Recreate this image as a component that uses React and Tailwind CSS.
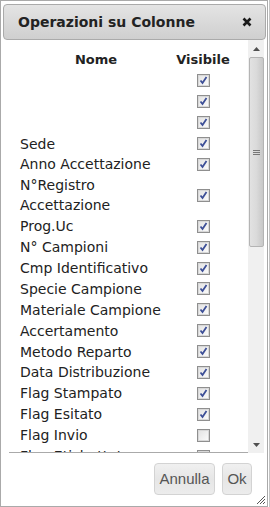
import React from "react";

const rows = [
  { t: "", c: true },
  { t: "", c: true },
  { t: "", c: true },
  { t: "Sede", c: true },
  { t: "Anno Accettazione", c: true },
  { t: ["N°Registro", "Accettazione"], c: true },
  { t: "Prog.Uc", c: true },
  { t: "N° Campioni", c: true },
  { t: "Cmp Identificativo", c: true },
  { t: "Specie Campione", c: true },
  { t: "Materiale Campione", c: true },
  { t: "Accertamento", c: true },
  { t: "Metodo Reparto", c: true },
  { t: "Data Distribuzione", c: true },
  { t: "Flag Stampato", c: true },
  { t: "Flag Esitato", c: true },
  { t: "Flag Invio", c: false },
  { t: "Flag Etichettato", c: false },
];

function Check({ checked }) {
  return (
    <span className="flex w-[13px] h-[13px] border border-[#8f8f8f] bg-gradient-to-br from-[#dcdcdc] to-[#fbfbfb] items-center justify-center">
      <span className="flex w-[11px] h-[11px] border border-[#d8d8d8] bg-gradient-to-br from-[#e4e4e4] to-[#fafafa] items-center justify-center">
        {checked && (
          <svg width="9" height="9" viewBox="0 0 9 9">
            <path d="M1.5 4.5 L3.5 7 L7.5 1" fill="none" stroke="#3d4f97" strokeWidth="1.8" />
          </svg>
        )}
      </span>
    </span>
  );
}

export default function App() {
  return (
    <div className="w-[270px] h-[507px] flex bg-white overflow-hidden" style={{ fontFamily: "'DejaVu Sans', Verdana, sans-serif" }}>
      <div className="w-[268px] h-[507px] border border-[#aaaaaa] flex flex-col relative bg-white">
        {/* title bar */}
        <div className="mt-[3px] ml-[2px] mr-[1px] h-[36px] border border-[#aaaaaa] rounded-[4px] bg-gradient-to-b from-[#e4e4e4] to-[#cfcfcf] flex items-center justify-between pl-[14px] pr-[13px]">
          <span className="text-[14px] font-bold text-[#222222] leading-none">Operazioni su Colonne</span>
          <svg width="10" height="10" viewBox="0 0 10 10">
            <path d="M1.5 1.5 L8.5 8.5 M8.5 1.5 L1.5 8.5" stroke="#1a1a1a" strokeWidth="2.6" />
          </svg>
        </div>
        {/* content */}
        <div className="flex ml-[8px] mr-[2px] h-[413px]">
          <div className="w-[239px] h-[413px] border-b border-[#aaaaaa] overflow-hidden">
            <div className="pt-[10px] pl-[7px] flex flex-col gap-[0.9px] text-[#222222]">
              <div className="flex h-[20px] items-center text-[13px] font-bold">
                <div className="w-[160px] text-center">Nome</div>
                <div className="w-[54px] text-center">Visibile</div>
              </div>
              {rows.map((r, i) => (
                <div key={i} className="flex items-center text-[14px] leading-[20px]">
                  <div className="w-[160px] pl-[4px] min-h-[20px]">
                    {Array.isArray(r.t) ? r.t.map((l, j) => <div key={j}>{l}</div>) : r.t}
                  </div>
                  <div className="w-[54px] flex justify-center">
                    <Check checked={r.c} />
                  </div>
                </div>
              ))}
            </div>
          </div>
          {/* scrollbar */}
          <div className="w-[16px] h-[413px] bg-[#f0f0f0] flex flex-col items-center">
            <div className="h-[17px] w-full flex items-center justify-center">
              <svg width="7" height="4" viewBox="0 0 7 4"><path d="M0 4 L3.5 0 L7 4 Z" fill="#505050" /></svg>
            </div>
            <div className="w-[15px] h-[190px] border border-[#b4b4b4] rounded-[2px] bg-gradient-to-r from-[#e2e2e2] via-[#dadada] to-[#c8c8c8] flex items-center justify-center">
              <div className="flex flex-col gap-[1px]">
                <div className="w-[7px] h-[1px] bg-[#777]" />
                <div className="w-[7px] h-[1px] bg-[#777]" />
                <div className="w-[7px] h-[1px] bg-[#777]" />
              </div>
            </div>
            <div className="flex-1" />
            <div className="h-[17px] w-full flex items-center justify-center">
              <svg width="7" height="4" viewBox="0 0 7 4"><path d="M0 0 L3.5 4 L7 0 Z" fill="#505050" /></svg>
            </div>
          </div>
        </div>
        {/* button pane */}
        <div className="flex justify-end gap-[7px] pt-[10px] pr-[15px]" style={{ fontFamily: "'Liberation Sans', Arial, sans-serif" }}>
          <button className="h-[32px] w-[61px] border border-[#d3d3d3] rounded-[4px] bg-gradient-to-b from-[#f0f0f0] via-[#e6e6e6] to-[#ececec] text-[15px] text-[#555555]">Annulla</button>
          <button className="h-[32px] w-[30px] border border-[#d3d3d3] rounded-[4px] bg-gradient-to-b from-[#f0f0f0] via-[#e6e6e6] to-[#ececec] text-[15px] text-[#555555]">Ok</button>
        </div>
        {/* resize handle */}
        <svg className="absolute right-[1px] bottom-[1px]" width="11" height="11" viewBox="0 0 11 11">
          <path d="M10 2 L2 10 M10 5 L5 10 M10 8 L8 10" stroke="#555" strokeWidth="1" />
        </svg>
      </div>
      <div className="w-[1px]" />
      <div className="w-[1px] h-[507px] bg-[#c4c4c4]" />
    </div>
  );
}
